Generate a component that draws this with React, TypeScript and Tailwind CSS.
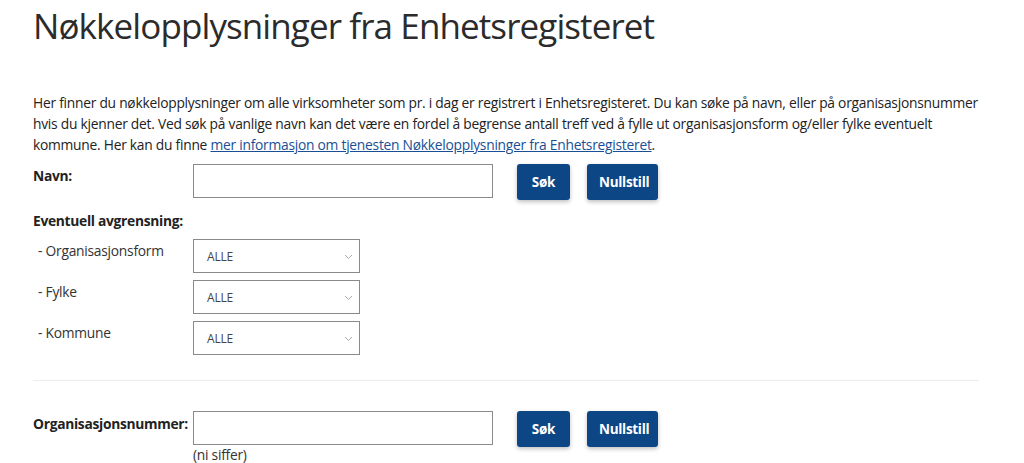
import React from 'react'

const font = { fontFamily: '"Open Sans", "Noto Sans", sans-serif' }

const Button: React.FC<{ children: React.ReactNode; className?: string }> = ({ children, className = '' }) => (
  <button
    className={`h-[36px] rounded-[3px] bg-[#0c4684] px-3 text-[13.5px] font-bold tracking-[-0.3px] text-white shadow-[0_2px_4px_rgba(0,0,0,0.25)] ${className}`}
  >
    {children}
  </button>
)

const Select: React.FC = () => (
  <div className="flex h-[34px] w-[167px] items-center justify-between border border-[#8a8a8a] bg-white pl-[13px] pr-[6px] pt-[2px] text-[12px] tracking-[-0.2px] text-[#444]">
    <span>ALLE</span>
    <svg width="9" height="6" viewBox="0 0 9 6" className="text-[#aaa]">
      <path d="M1 1l3.5 3.5L8 1" fill="none" stroke="currentColor" strokeWidth="1" />
    </svg>
  </div>
)

export default function App() {
  return (
    <div className="min-h-[463px] bg-white text-[#222]" style={font}>
      <div className="w-[946px] pl-[33px] box-content">
        <h1 className="pt-[1px] text-[35px] leading-[50px] tracking-[-0.9px] text-[#2b2b2b]">
          Nøkkelopplysninger fra Enhetsregisteret
        </h1>

        <p className="mt-[41px] text-[13.8px] leading-[21px] tracking-[-0.25px] text-[#222]">
          Her finner du nøkkelopplysninger om alle virksomheter som pr. i dag er registrert i Enhetsregisteret. Du kan søke på navn, eller på organisasjonsnummer hvis du kjenner det. Ved søk på vanlige navn kan det være en fordel å begrense antall treff ved å fylle ut organisasjonsform og/eller fylke eventuelt kommune. Her kan du finne{' '}
          <a href="#" className="text-[#1a4f96] underline">
            mer informasjon om tjenesten Nøkkelopplysninger fra Enhetsregisteret
          </a>
          .
        </p>

        <div className="mt-[9px] flex">
          <div className="w-[160px] pt-[2px] text-[13.8px] font-bold tracking-[-0.3px]">Navn:</div>
          <div className="h-[34px] w-[300px] border border-[#8a8a8a]" />
          <div className="ml-[24px] flex gap-[17px]">
            <Button className="w-[53px]">Søk</Button>
            <Button className="w-[71px]">Nullstill</Button>
          </div>
        </div>

        <div className="mt-[11px] text-[13.8px] font-bold tracking-[-0.3px]">Eventuell avgrensning:</div>

        <div className="mt-[7px] flex flex-col gap-[7px] text-[13.8px] tracking-[-0.25px]">
          {['Organisasjonsform', 'Fylke', 'Kommune'].map((label) => (
            <div key={label} className="flex">
              <div className="w-[160px] pl-[5px] pt-[2px] text-[#333]">- {label}</div>
              <Select />
            </div>
          ))}
        </div>

        <hr className="mt-[25px] border-t border-[#ececec]" />

        <div className="mt-[30px] flex">
          <div className="w-[160px] pt-[3px] text-[13.8px] font-bold tracking-[-0.3px]">Organisasjonsnummer:</div>
          <div>
            <div className="h-[34px] w-[300px] border border-[#8a8a8a]" />
            <div className="text-[13.8px] leading-[20px] tracking-[-0.25px] text-[#333]">(ni siffer)</div>
          </div>
          <div className="ml-[24px] flex items-start gap-[17px]">
            <Button className="w-[53px]">Søk</Button>
            <Button className="w-[71px]">Nullstill</Button>
          </div>
        </div>
      </div>
    </div>
  )
}
